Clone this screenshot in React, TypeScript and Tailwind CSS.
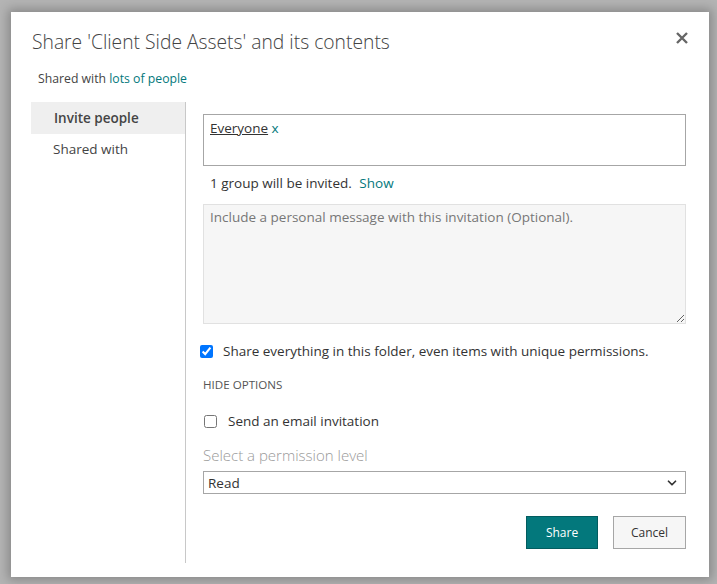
import { ChevronDown } from "lucide-react"

const font = { fontFamily: '"Segoe UI", "Open Sans", "Noto Sans", sans-serif' }

export default function App() {
  return (
    <div className="h-[584px] w-full bg-[#b4b4b4] pl-[11px] pt-[12px]" style={font}>
      <div className="relative flex h-[565px] w-[698px] flex-col bg-white pt-[16px] shadow-[0_0_10px_3px_rgba(0,0,0,0.25)]">
        <button className="absolute right-[17px] top-[16px] p-1 text-[#666]">
          <svg width="12" height="12" viewBox="0 0 12 12">
            <path d="M1 1L11 11M11 1L1 11" stroke="currentColor" strokeWidth="2.4" />
          </svg>
        </button>

        <h1 className="pl-[21px] text-[19.3px] font-light leading-[28px] text-[#444]">
          Share 'Client Side Assets' and its contents
        </h1>
        <p className="mt-[14px] pl-[27px] text-[12.25px] leading-[18px] text-[#444]">
          Shared with <span className="text-[#03787c]">lots of people</span>
        </p>

        <div className="mt-[14px] flex h-[461px] pl-[20px] pr-[23px]">
          <nav className="w-[155px] shrink-0 border-r border-[#c8c8c8]">
            <div className="flex h-[32px] items-center bg-[#efefef] pl-[23px] pt-[1px] text-[13.5px] font-semibold text-[#444]">
              Invite people
            </div>
            <div className="flex h-[30px] items-center pl-[22px] pt-[1px] text-[13.5px] text-[#444]">Shared with</div>
          </nav>

          <div className="flex flex-1 flex-col pl-[17px] pt-[12px] text-[13.5px] text-[#333]">
            <div className="h-[52px] border border-[#a6a6a6] px-[6px] pt-[4px] leading-[18px]">
              <span className="underline">Everyone</span> <span className="text-[#03787c]">x</span>
            </div>
            <p className="mt-[8px] pl-[7px] leading-[18px]">
              1 group will be invited. <span className="ml-1 text-[#03787c]">Show</span>
            </p>
            <textarea
              className="mt-[12px] h-[120px] border border-[#e1e1e1] bg-[#f6f6f6] px-[6px] py-[3px] text-[13.5px] leading-[18px] outline-none placeholder:text-[#777]"
              placeholder="Include a personal message with this invitation (Optional)."
              style={font}
            />
            <label className="mt-[17px] flex h-[20px] items-center">
              <input type="checkbox" defaultChecked className="ml-[-3px] h-[13px] w-[13px]" />
              <span className="ml-[10px]">Share everything in this folder, even items with unique permissions.</span>
            </label>
            <p className="mt-[16px] text-[11.6px] uppercase leading-[16px] text-[#555]">Hide options</p>
            <label className="mt-[18px] flex h-[20px] items-center">
              <input type="checkbox" className="ml-[1px] h-[13px] w-[13px]" />
              <span className="ml-[11px]">Send an email invitation</span>
            </label>
            <p className="mt-[14px] text-[15px] font-light leading-[20px] text-[#999]">Select a permission level</p>
            <div className="mt-[6px] flex h-[23px] items-center justify-between border border-[#a6a6a6] pl-[4px] pr-[6px]">
              <span className="pt-[1px]">Read</span>
              <ChevronDown size={14} strokeWidth={3} className="text-[#333]" />
            </div>
            <div className="mt-[22px] flex justify-end gap-[15px]">
              <button className="h-[33px] w-[72px] border border-[#025c5f] bg-[#03787c] text-[12px] text-white">Share</button>
              <button className="h-[33px] w-[73px] border border-[#a6a6a6] bg-[#f6f6f6] text-[12px] text-[#333]">Cancel</button>
            </div>
          </div>
        </div>
      </div>
    </div>
  )
}
